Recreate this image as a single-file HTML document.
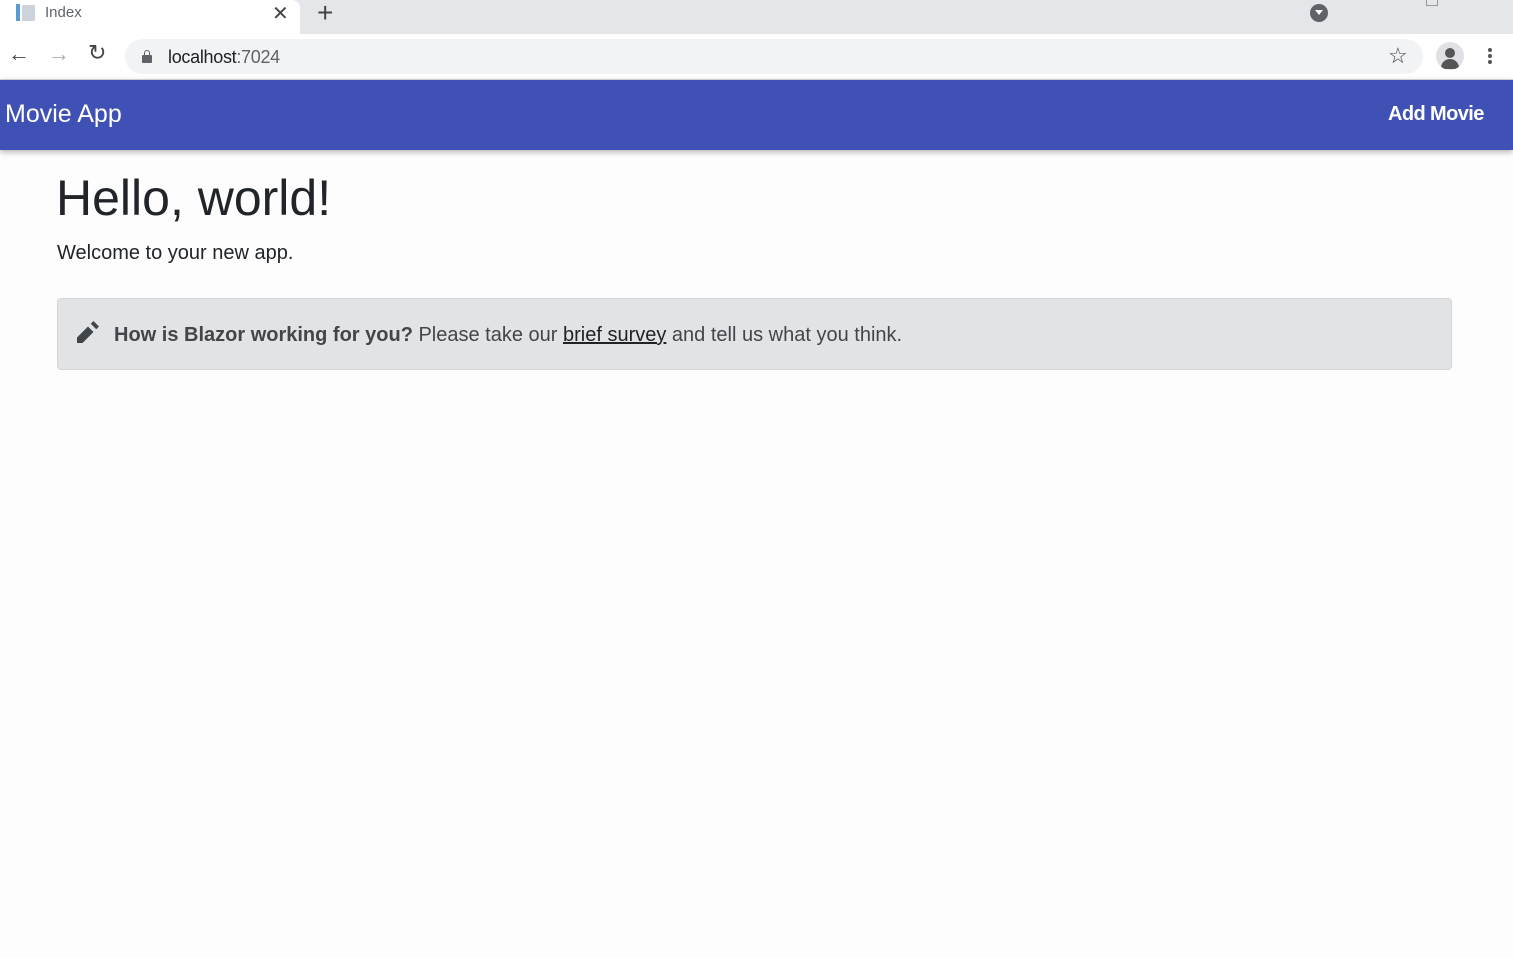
<!DOCTYPE html>
<html><head><style>
*{box-sizing:border-box;margin:0;padding:0}
body{width:1513px;height:958px;overflow:hidden;background:#fdfdfd;font-family:"Liberation Sans",Arial,sans-serif;position:relative}
.tabbar{position:absolute;top:0;left:0;width:1513px;height:34px;background:#e4e6e9}
.tab{position:absolute;left:0;top:0;width:300px;height:34px;background:#fff;border-top-right-radius:8px}
.toolbar{position:absolute;top:34px;left:0;width:1513px;height:46px;background:#fff;border-bottom:1px solid #dadce0}
.omni{position:absolute;left:125px;top:5px;width:1298px;height:35px;background:#f1f3f4;border-radius:18px}
.nav{position:absolute;top:80px;left:0;width:1513px;height:70px;background:#3f51b5;box-shadow:0 2px 6px rgba(0,0,0,.3)}
.a{position:absolute;color:#fff;font-size:22px}
</style></head><body>
<div class="tabbar">
 <div class="tab">
  <div style="position:absolute;left:16px;top:4px;width:4px;height:17px;background:#5b9bd5"></div>
  <div style="position:absolute;left:22px;top:5px;width:13px;height:16px;background:#ccd3dc"></div>
  <div style="position:absolute;left:45px;top:4px;font-size:15px;color:#5f6368">Index</div>
  <div style="position:absolute;left:272px;top:1px;font-size:20px;color:#444">✕</div>
 </div>
 <div style="position:absolute;left:317px;top:-3px;font-size:28px;color:#444">+</div>
 <div style="position:absolute;left:1310px;top:4px;width:18px;height:18px;border-radius:50%;background:#5f6368"></div>
 <div style="position:absolute;left:1315px;top:10px;width:0;height:0;border-left:4px solid transparent;border-right:4px solid transparent;border-top:5px solid #fff"></div>
 <div style="position:absolute;left:1426px;top:-6px;width:12px;height:12px;border:1px solid #999"></div>
</div>
<div class="toolbar">
 <div style="position:absolute;left:8px;top:7px;font-size:22px;color:#444">←</div>
 <div style="position:absolute;left:48px;top:7px;font-size:22px;color:#aaa">→</div>
 <div style="position:absolute;left:88px;top:6px;font-size:22px;color:#444">↻</div>
 <div class="omni">
  <div style="position:absolute;left:17px;top:16px;width:10px;height:8px;background:#5f6368;border-radius:1px"></div>
  <div style="position:absolute;left:19px;top:11px;width:6px;height:7px;border:1.5px solid #5f6368;border-radius:3px 3px 0 0"></div>
  <div style="position:absolute;left:43px;top:8px;font-size:18px;color:#202124;letter-spacing:-0.3px">localhost<span style="color:#5f6368">:7024</span></div>
  <div style="position:absolute;left:1263px;top:4px;font-size:22px;color:#444">☆</div>
 </div>
 <div style="position:absolute;left:1436px;top:8px;width:28px;height:28px;border-radius:50%;background:#e0e1e4;overflow:hidden">
  <div style="position:absolute;left:9px;top:6px;width:10px;height:10px;border-radius:50%;background:#555"></div>
  <div style="position:absolute;left:5px;top:17px;width:18px;height:10px;border-radius:9px 9px 0 0;background:#555"></div>
 </div>
 <div style="position:absolute;left:1488px;top:14px;width:4px;height:4px;border-radius:50%;background:#555;box-shadow:0 6px 0 #555,0 12px 0 #555"></div>
</div>
<div class="nav">
 <div class="a" style="left:5px;top:20px;font-size:25px">Movie App</div>
 <div class="a" style="left:1388px;top:23px;font-size:20px;font-weight:bold;letter-spacing:-0.6px">Add Movie</div>
</div>
<div style="position:absolute;left:56px;top:169px;font-size:50px;color:#212529">Hello, world!</div>
<div style="position:absolute;left:57px;top:242px;font-size:20px;color:#212529">Welcome to your new app.</div>
<div style="position:absolute;left:57px;top:298px;width:1395px;height:72px;background:#e2e3e5;border:1px solid #d3d6d8;border-radius:4px">
 <svg style="position:absolute;left:19px;top:22px" width="22" height="22" viewBox="0 0 8 8"><path fill="#41464b" d="M6 0L5 1l2 2 1-1-2-2zM4 2L0 6v2h2l4-4-2-2z"/></svg>
 <div style="position:absolute;left:56px;top:25px;font-size:20px;color:#41464b;white-space:nowrap"><b>How is Blazor working for you?</b> Please take our <u style="color:#202325">brief survey</u> and tell us what you think.</div>
</div>
</body></html>
